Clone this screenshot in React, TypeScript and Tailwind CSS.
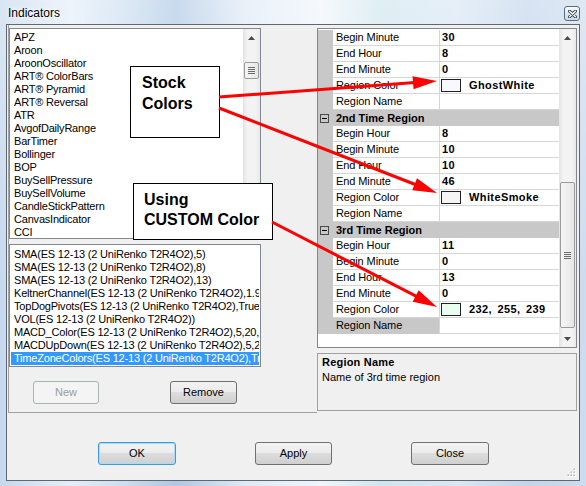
import React from "react";

const indicatorNames = [
  "APZ",
  "Aroon",
  "AroonOscillator",
  "ART® ColorBars",
  "ART® Pyramid",
  "ART® Reversal",
  "ATR",
  "AvgofDailyRange",
  "BarTimer",
  "Bollinger",
  "BOP",
  "BuySellPressure",
  "BuySellVolume",
  "CandleStickPattern",
  "CanvasIndicator",
  "CCI",
];

const appliedIndicators = [
  "SMA(ES 12-13 (2 UniRenko T2R4O2),5)",
  "SMA(ES 12-13 (2 UniRenko T2R4O2),8)",
  "SMA(ES 12-13 (2 UniRenko T2R4O2),13)",
  "KeltnerChannel(ES 12-13 (2 UniRenko T2R4O2),1.9,20)",
  "TopDogPivots(ES 12-13 (2 UniRenko T2R4O2),True,True)",
  "VOL(ES 12-13 (2 UniRenko T2R4O2))",
  "MACD_Color(ES 12-13 (2 UniRenko T2R4O2),5,20,30)",
  "MACDUpDown(ES 12-13 (2 UniRenko T2R4O2),5,20,30)",
  "TimeZoneColors(ES 12-13 (2 UniRenko T2R4O2),True)",
];

type GridRow =
  | { kind: "prop"; name: string; value?: string; swatch?: string; selected?: boolean }
  | { kind: "cat"; name: string };

const gridRows: GridRow[] = [
  { kind: "prop", name: "Begin Minute", value: "30" },
  { kind: "prop", name: "End Hour", value: "8" },
  { kind: "prop", name: "End Minute", value: "0" },
  { kind: "prop", name: "Region Color", value: "GhostWhite", swatch: "#f8f8ff" },
  { kind: "prop", name: "Region Name", value: "" },
  { kind: "cat", name: "2nd Time Region" },
  { kind: "prop", name: "Begin Hour", value: "8" },
  { kind: "prop", name: "Begin Minute", value: "10" },
  { kind: "prop", name: "End Hour", value: "10" },
  { kind: "prop", name: "End Minute", value: "46" },
  { kind: "prop", name: "Region Color", value: "WhiteSmoke", swatch: "#f5f5f5" },
  { kind: "prop", name: "Region Name", value: "" },
  { kind: "cat", name: "3rd Time Region" },
  { kind: "prop", name: "Begin Hour", value: "11" },
  { kind: "prop", name: "Begin Minute", value: "0" },
  { kind: "prop", name: "End Hour", value: "13" },
  { kind: "prop", name: "End Minute", value: "0" },
  { kind: "prop", name: "Region Color", value: "232, 255, 239", swatch: "#e8ffef" },
  { kind: "prop", name: "Region Name", value: "", selected: true },
];

function ArrowGlyph({ up }: { up: boolean }) {
  return (
    <svg width="7" height="4" viewBox="0 0 7 4">
      {up ? (
        <polygon points="3.5,0 7,4 0,4" fill="#4a4a4a" />
      ) : (
        <polygon points="0,0 7,0 3.5,4" fill="#4a4a4a" />
      )}
    </svg>
  );
}

function Thumb({ className }: { className: string }) {
  return (
    <div
      className={`mx-[1px] rounded-[2px] border border-[#9a9a9a] bg-[linear-gradient(90deg,#f5f5f5,#e6e6e6)] flex flex-col items-center justify-center gap-[1px] ${className}`}
    >
      <div className="w-[7px] h-[1px] bg-[#6d6d6d]" />
      <div className="w-[7px] h-[1px] bg-[#6d6d6d]" />
      <div className="w-[7px] h-[1px] bg-[#6d6d6d]" />
      <div className="w-[7px] h-[1px] bg-[#6d6d6d]" />
    </div>
  );
}

function CloseGlyph() {
  return (
    <div className="mt-[6px] w-[16px] h-[15px] rounded-[3px] border border-[#5b6b80] bg-[linear-gradient(180deg,rgba(255,255,255,0.8),rgba(220,232,246,0.6)_50%,rgba(190,210,235,0.6))] flex items-center justify-center">
      <svg width="9" height="8" viewBox="0 0 9 8">
        <path d="M1.5 1.2 L7.5 6.8 M7.5 1.2 L1.5 6.8" stroke="#2f3640" strokeWidth="3" strokeLinecap="round" />
        <path d="M1.5 1.2 L7.5 6.8 M7.5 1.2 L1.5 6.8" stroke="#ffffff" strokeWidth="1.4" strokeLinecap="round" />
      </svg>
    </div>
  );
}

function WinButton({
  label,
  className,
  disabled,
  focused,
}: {
  label: string;
  className: string;
  disabled?: boolean;
  focused?: boolean;
}) {
  const base = "h-[23px] rounded-[3px] border flex items-center justify-center text-[11px]";
  const look = disabled
    ? "border-[#adb2b5] bg-[#f4f4f4] text-[#9d9d9d]"
    : focused
    ? "border-[#3c9ad6] shadow-[inset_0_0_0_1px_#a6dcf7] bg-[linear-gradient(180deg,#f2f2f2_0%,#ebebeb_50%,#dddddd_50%,#cfcfcf_100%)] text-black"
    : "border-[#707070] bg-[linear-gradient(180deg,#f2f2f2_0%,#ebebeb_50%,#dddddd_50%,#cfcfcf_100%)] text-black";
  return <div className={`${base} ${look} ${className}`}>{label}</div>;
}

function Callout({ x1, y1, x2, y2 }: { x1: number; y1: number; x2: number; y2: number }) {
  const dx = x2 - x1;
  const dy = y2 - y1;
  const len = Math.hypot(dx, dy);
  const ux = dx / len;
  const uy = dy / len;
  const headLen = 24;
  const headHalf = 6.5;
  const bx = x2 - ux * headLen;
  const by = y2 - uy * headLen;
  const px = -uy;
  const py = ux;
  const pts = `${x2},${y2} ${bx + px * headHalf},${by + py * headHalf} ${bx - px * headHalf},${by - py * headHalf}`;
  return (
    <g>
      <line x1={x1} y1={y1} x2={bx + ux * 2} y2={by + uy * 2} stroke="#ff0000" strokeWidth="3" />
      <polygon points={pts} fill="#ff0000" />
    </g>
  );
}

function PropertyGrid() {
  return (
    <div className="h-[320px] border border-[#828790] bg-white flex">
      <div className="w-[241px] flex flex-col pt-[1px]">
        {gridRows.map((row, i) =>
          row.kind === "cat" ? (
            <div key={i} className="h-[16px] bg-[#c8c8c8] flex items-center">
              <div className="ml-[2px] w-[9px] h-[9px] border border-[#4a4a4a] flex items-center justify-center">
                <div className="w-[5px] h-[1px] bg-black" />
              </div>
              <span className="ml-[7px] text-[11px] font-bold leading-[15px]">{row.name}</span>
            </div>
          ) : (
            <div key={i} className="h-[16px] flex">
              <div className="w-[15px] bg-[#c8c8c8]" />
              <div
                className={`w-[106px] pl-[3px] text-[11px] leading-[15px] tracking-[-0.1px] whitespace-nowrap ${
                  row.selected ? "bg-[#c8c8c8]" : "border-b border-[#d6d6d6]"
                }`}
              >
                {row.name}
              </div>
              <div className="w-[1px] bg-[#d6d6d6]" />
              <div className="w-[119px] border-b border-[#d6d6d6] flex items-center text-[11px] font-bold leading-[15px] tracking-[0.4px] whitespace-nowrap">
                {row.swatch ? (
                  <>
                    <div
                      className={`ml-[1px] w-[20px] h-[13px] border border-[#222]`}
                      style={{ backgroundColor: row.swatch }}
                    />
                    <span className="ml-[8px] [word-spacing:2px]">{row.value}</span>
                  </>
                ) : (
                  <span className="pl-[2px]">{row.value}</span>
                )}
              </div>
            </div>
          )
        )}
      </div>
      <div className="w-[17px] flex flex-col bg-[linear-gradient(90deg,#e3e3e3,#f3f3f3_25%,#f3f3f3_75%,#e8e8e8)]">
        <div className="h-[17px] flex items-center justify-center">
          <ArrowGlyph up />
        </div>
        <div className="h-[136px]" />
        <Thumb className="h-[146px]" />
        <div className="flex-1" />
        <div className="h-[17px] flex items-center justify-center">
          <ArrowGlyph up={false} />
        </div>
      </div>
    </div>
  );
}

export default function App() {
  return (
    <div className="relative w-[586px] h-[486px] overflow-hidden font-['Liberation_Sans',Arial,sans-serif] text-black bg-[linear-gradient(180deg,rgba(255,255,255,0.35),rgba(255,255,255,0)_60%),linear-gradient(90deg,#c6d8ee_0%,#e4eef9_12%,#c9dcef_22%,#aec7e4_30%,#dfeaf6_42%,#f0f5fb_55%,#cfe6ee_65%,#d9e6f4_78%,#c2d5ec_90%,#cddcee_100%)]">
      {/* title bar */}
      <div className="h-[24px] flex items-start justify-between pl-[8px] pr-[6px]">
        <span className="text-[12px] leading-[24px] pt-[1px] [text-shadow:0_0_6px_#ffffff,0_0_3px_#ffffff]">
          Indicators
        </span>
        <CloseGlyph />
      </div>

      {/* client area */}
      <div className="relative ml-[6px] w-[574px] h-[457px] border border-[#5f6770] bg-[#f0f0f0] flex flex-col">
        <div className="h-[388px] flex">
          {/* left: indicator lists */}
          <div className="ml-[1px] w-[309px] border-l border-b border-[#a0a0a0] pt-[3px] flex flex-col">
            <div className="w-[252px] h-[211px] border border-[#828790] bg-white flex">
              <div className="flex-1 pl-[4px] pt-[2px] text-[11px] leading-[13px] tracking-[-0.2px] overflow-hidden">
                {indicatorNames.map((n) => (
                  <div key={n} className="h-[13px] whitespace-nowrap">
                    {n}
                  </div>
                ))}
              </div>
              <div className="w-[17px] flex flex-col bg-[linear-gradient(90deg,#e3e3e3,#f3f3f3_25%,#f3f3f3_75%,#e8e8e8)]">
                <div className="h-[17px] flex items-center justify-center">
                  <ArrowGlyph up />
                </div>
                <div className="h-[16px]" />
                <Thumb className="h-[17px]" />
              </div>
            </div>

            <div className="mt-[5px] w-[252px] h-[123px] border border-[#828790] bg-white pt-[3px] pl-[1px] pr-[1px] text-[11px] leading-[13px] tracking-[-0.2px] overflow-hidden">
              {appliedIndicators.map((n, i) => (
                <div
                  key={i}
                  className={`h-[13px] pl-[3px] whitespace-nowrap overflow-hidden ${
                    i === appliedIndicators.length - 1 ? "bg-[#3399ff] text-white" : ""
                  }`}
                >
                  {n}
                </div>
              ))}
            </div>

            <div className="mt-[14px] pl-[24px] flex">
              <WinButton label="New" className="w-[66px]" disabled />
              <WinButton label="Remove" className="ml-[71px] w-[67px]" />
            </div>
          </div>

          {/* right: properties */}
          <div className="w-[260px] pt-[3px] flex flex-col">
            <PropertyGrid />
            <div className="mt-[5px] h-[58px] border border-[#a0a0a0] bg-[#f0f0f0] px-[4px] pt-[1px] text-[11px] leading-[15px]">
              <div className="font-bold tracking-[0.2px]">Region Name</div>
              <div>Name of 3rd time region</div>
            </div>
          </div>
        </div>

        {/* dialog buttons */}
        <div className="flex-1 pt-[29px] pl-[91px] flex items-start">
          <WinButton label="OK" className="w-[78px]" focused />
          <WinButton label="Apply" className="ml-[79px] w-[77px]" />
          <WinButton label="Close" className="ml-[79px] w-[78px]" />
        </div>

        {/* size grip */}
        <svg className="absolute right-[2px] bottom-[2px]" width="10" height="10" viewBox="0 0 10 10">
          {[
            [8, 2],
            [5, 5],
            [8, 5],
            [2, 8],
            [5, 8],
            [8, 8],
          ].map(([x, y], i) => (
            <g key={i}>
              <rect x={x - 1} y={y - 1} width="2" height="2" fill="#ffffff" />
              <rect x={x - 1.5} y={y - 1.5} width="1.5" height="1.5" fill="#b8b8b8" />
            </g>
          ))}
        </svg>
      </div>

      {/* annotation callouts */}
      <div className="absolute left-[130px] top-[66px] w-[90px] h-[72px] border border-black bg-white pl-[11px] pt-[5px] text-[16px] font-bold leading-[21px]">
        <div>Stock</div>
        <div>Colors</div>
      </div>
      <div className="absolute left-[133px] top-[183px] w-[140px] h-[57px] border border-black bg-white pl-[10px] pt-[6px] text-[16px] font-bold leading-[20px] whitespace-nowrap">
        <div>Using</div>
        <div>CUSTOM Color</div>
      </div>
      <svg className="absolute left-0 top-0 pointer-events-none" width="586" height="486" viewBox="0 0 586 486">
        <Callout x1={219} y1={97} x2={437} y2={81} />
        <Callout x1={219} y1={108} x2={437} y2={193} />
        <Callout x1={272} y1={222} x2={437} y2={307} />
      </svg>
    </div>
  );
}
